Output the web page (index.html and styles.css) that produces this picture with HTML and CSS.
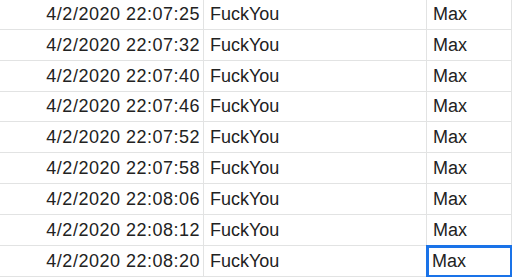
FILE: index.html
```html
<!DOCTYPE html>
<html lang="en">

<head>
    <meta charset="UTF-8">
    <meta name="viewport" content="width=device-width, initial-scale=1.0">
    <title>Sheet</title>
    <link rel="stylesheet" href="styles.css">
</head>

<body>

    <!-- Spreadsheet rows: timestamp, message, name -->
    <div class="sheet">
        <div class="cell date">4/2/2020 22:07:25</div>
        <div class="cell">FuckYou</div>
        <div class="cell">Max</div>

        <div class="cell date">4/2/2020 22:07:32</div>
        <div class="cell">FuckYou</div>
        <div class="cell">Max</div>

        <div class="cell date">4/2/2020 22:07:40</div>
        <div class="cell">FuckYou</div>
        <div class="cell">Max</div>

        <div class="cell date">4/2/2020 22:07:46</div>
        <div class="cell">FuckYou</div>
        <div class="cell">Max</div>

        <div class="cell date">4/2/2020 22:07:52</div>
        <div class="cell">FuckYou</div>
        <div class="cell">Max</div>

        <div class="cell date">4/2/2020 22:07:58</div>
        <div class="cell">FuckYou</div>
        <div class="cell">Max</div>

        <div class="cell date">4/2/2020 22:08:06</div>
        <div class="cell">FuckYou</div>
        <div class="cell">Max</div>

        <div class="cell date">4/2/2020 22:08:12</div>
        <div class="cell">FuckYou</div>
        <div class="cell">Max</div>

        <div class="cell date">4/2/2020 22:08:20</div>
        <div class="cell">FuckYou</div>
        <div class="cell selected">Max</div>
    </div>

</body>

</html>
```

FILE: styles.css
```css
* {
    margin: 0;
    padding: 0;
    box-sizing: border-box;
}

body {
    font-family: "Liberation Sans", Arial, sans-serif;
    background-color: #fff;
    overflow: hidden;
}

/* Grid of cells, first row is scrolled a little out of view */
.sheet {
    display: grid;
    grid-template-columns: 204px 223px 1fr;
    grid-auto-rows: 30.85px;
    margin-top: -1px;
}

.cell {
    display: flex;
    align-items: flex-end;
    padding: 0 6px 5px 6px;
    font-size: 18px;
    line-height: 20px;
    color: #222;
    white-space: nowrap;
    border-right: 1px solid #e2e3e3;
    border-bottom: 1px solid #e2e3e3;
}

.date {
    justify-content: flex-end;
    padding-right: 3px;
    letter-spacing: 0.5px;
}

/* Active cell */
.selected {
    outline: 3px solid #1a73e8;
    outline-offset: -2px;
    padding-left: 5px;
}
```
